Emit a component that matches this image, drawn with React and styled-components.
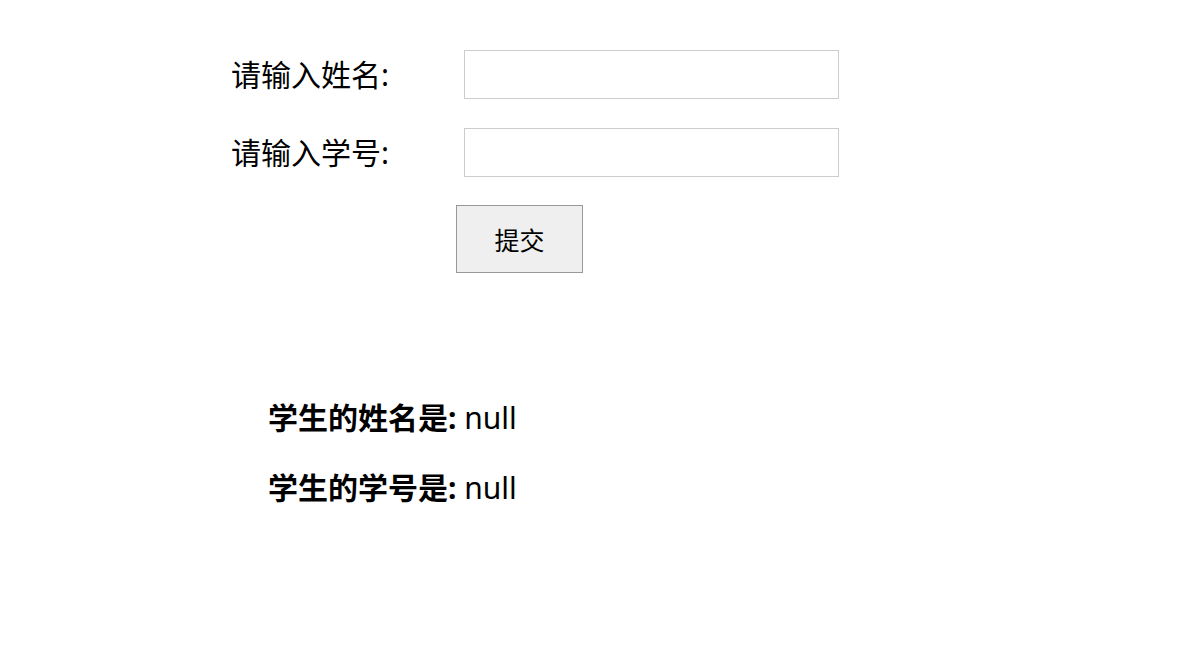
import React, { useState } from 'react';
import styled, { createGlobalStyle } from 'styled-components';

const GlobalStyle = createGlobalStyle`
  body {
    margin: 0;
    background: #fff;
    font-family: 'Noto Sans', 'Noto Sans CJK SC', sans-serif;
    color: #000;
  }
`;

const App = () => {
  const [name, setName] = useState(''); //* form state
  const [num, setNum] = useState(''); //* form state
  const [student, setStudent] = useState({ name: null, num: null });

  const handleSubmit = (e) => {
    e.preventDefault();
    setStudent({ name: name || null, num: num || null });
  };

  return (
    <Page>
      <GlobalStyle />
      <Form onSubmit={handleSubmit}>
        <Label htmlFor='name'>请输入姓名:</Label>
        <Input id='name' value={name} onChange={(e) => setName(e.target.value)} />
        <Label htmlFor='num'>请输入学号:</Label>
        <Input id='num' value={num} onChange={(e) => setNum(e.target.value)} />
        <span />
        <Button type='submit'>提交</Button>
      </Form>
      <Result>
        <Line>
          <b>学生的姓名是:</b> {String(student.name)}
        </Line>
        <Line>
          <b>学生的学号是:</b> {String(student.num)}
        </Line>
      </Result>
    </Page>
  );
};

export default App;

const Page = styled.div`
  padding: 50px 0 0 231px;
`;

const Form = styled.form`
  display: grid;
  grid-template-columns: 233px 375px;
  row-gap: 29px;
  align-items: center;
`;

const Label = styled.label`
  font-size: 30px;
  line-height: 49px;
  white-space: nowrap;
`;

const Input = styled.input`
  box-sizing: border-box;
  width: 375px;
  height: 49px;
  border: 1px solid #cccccc;
  padding: 0 8px;
  font-size: 20px;
  outline: none;
`;

const Button = styled.button`
  justify-self: start;
  margin: -1px 0 0 -8px;
  width: 127px;
  height: 68px;
  box-sizing: border-box;
  background: #efefef;
  border: 1px solid #999999;
  font-family: 'Noto Sans', 'Noto Sans CJK SC', sans-serif;
  font-size: 25px;
  color: #000;
  cursor: pointer;
`;

const Result = styled.div`
  margin-top: 124px;
  padding-left: 37px;
  display: flex;
  flex-direction: column;
  gap: 28px;
`;

const Line = styled.p`
  margin: 0;
  font-size: 30px;
  line-height: 42px;
`;
